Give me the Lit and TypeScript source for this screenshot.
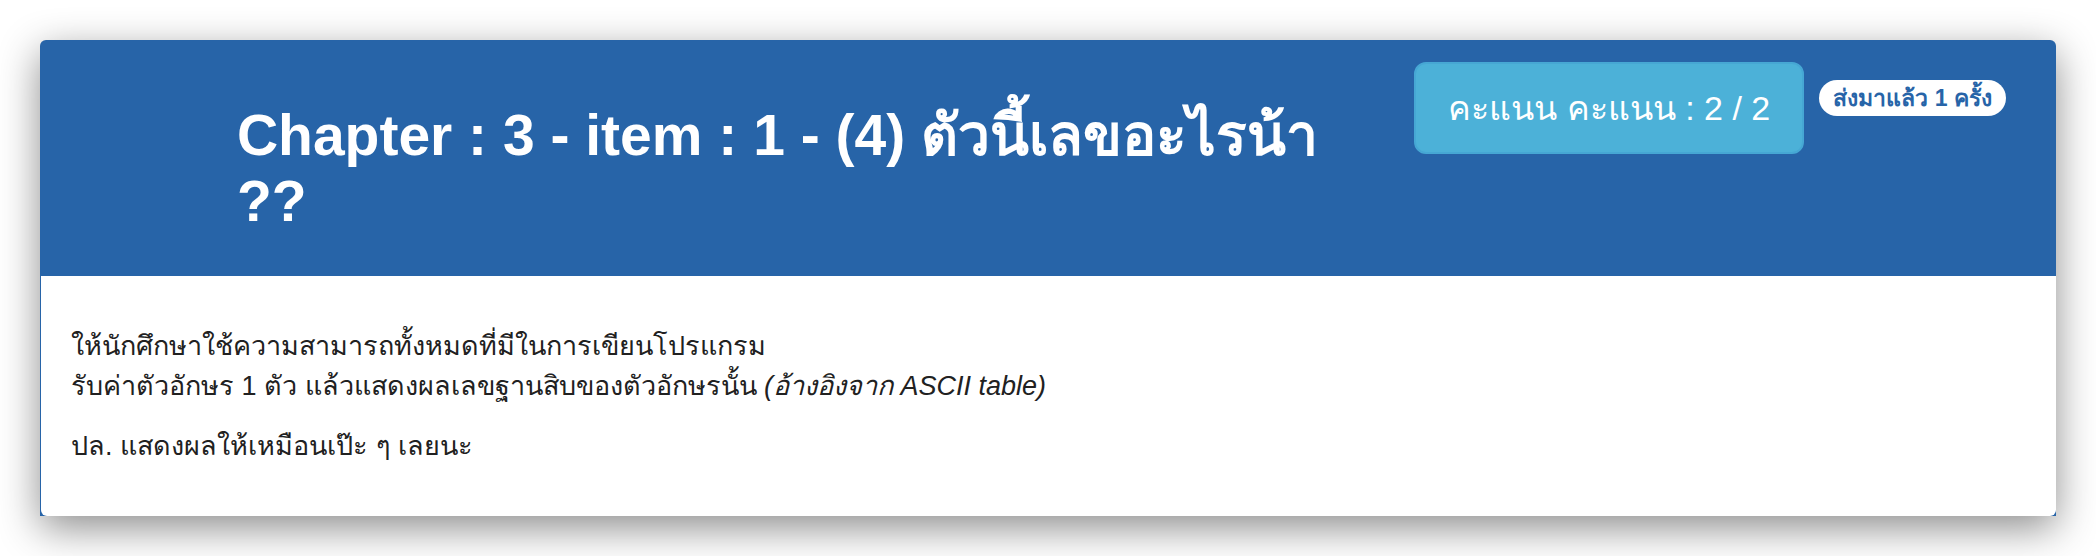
import { LitElement, html, css } from "lit";
import { customElement } from "lit/decorators.js";

@customElement("app-root")
export class AppRoot extends LitElement {
  static styles = css`
    :host {
      display: block;
      padding: 40px;
      color: #212121;
      background: #fff;
      font-family: "Liberation Sans", Arial, sans-serif;
      font-size: 27px;
      line-height: 40px;
    }
    * {
      box-sizing: border-box;
    }
    .panel {
      padding-left: 1px;
      border-radius: 6px 6px 0 0;
      background: #2764a8;
      box-shadow: 0 12px 40px rgba(0, 0, 0, 0.45);
    }
    .heading {
      display: grid;
      grid-template-columns: 1fr 7fr 4fr;
      padding: 22px 0 20px;
      color: #fff;
    }
    .title {
      grid-column: 2;
      margin: 40px 28px 22px;
      font-size: 57px;
      line-height: 66px;
      font-weight: 700;
    }
    .status {
      display: flex;
      align-items: flex-start;
      gap: 15px;
      padding-left: 30px;
    }
    .score {
      padding: 20px 32px;
      border: 2px solid #46a7d4;
      border-radius: 12px;
      background: #4cb1d8;
      color: #fff;
      font: 34px/48px "Liberation Sans", Arial, sans-serif;
      white-space: nowrap;
      cursor: pointer;
    }
    .badge {
      margin-top: 18px;
      padding: 6px 14px;
      border-radius: 20px;
      background: #fff;
      color: #2764a8;
      font-size: 23px;
      line-height: 24px;
      font-weight: 700;
      white-space: nowrap;
    }
    .body {
      padding: 50px 30px;
      border-radius: 0 0 6px 6px;
      background: #fff;
    }
    p {
      margin: 0 0 20px;
    }
    p:last-child {
      margin: 0;
    }
  `;

  render() {
    return html`
      <section class="panel">
        <header class="heading">
          <h1 class="title">Chapter : 3 - item : 1 - (4) ตัวนี้เลขอะไรน้า ??</h1>
          <div class="status">
            <button class="score" type="button">คะแนน คะแนน : 2 / 2</button>
            <span class="badge">ส่งมาแล้ว 1 ครั้ง</span>
          </div>
        </header>
        <div class="body">
          <p>
            ให้นักศึกษาใช้ความสามารถทั้งหมดที่มีในการเขียนโปรแกรม<br />
            รับค่าตัวอักษร 1 ตัว แล้วแสดงผลเลขฐานสิบของตัวอักษรนั้น
            <em>(อ้างอิงจาก ASCII table)</em>
          </p>
          <p>ปล. แสดงผลให้เหมือนเป๊ะ ๆ เลยนะ</p>
        </div>
      </section>
    `;
  }
}
